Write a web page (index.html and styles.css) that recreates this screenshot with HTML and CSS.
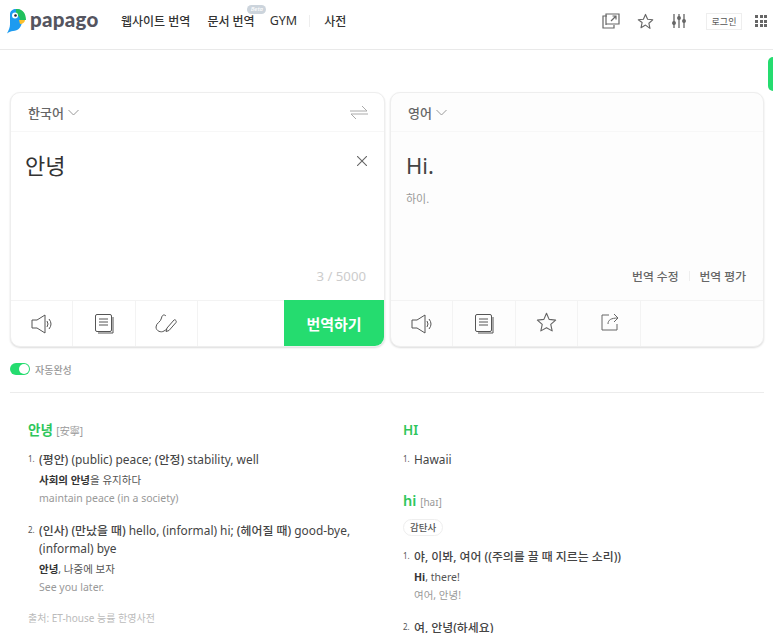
FILE: index.html
```html
<!DOCTYPE html>
<html lang="ko">
<head>
<meta charset="UTF-8" />
<meta name="viewport" content="width=device-width, initial-scale=1" />
<title>papago</title>
<link rel="stylesheet" href="styles.css">
</head>
<body>
  <header class="header">
    <a class="logo">
      <svg width="20" height="25" viewBox="0 0 20 25">
        <path d="M3 5C3 2 6 0 9 0c4 0 6 2 6 6v6c0 6-4 10-9 10-2 0-4 1-6 2.500 1.500-3 3-6 3-9z" fill="#1d9bf0"/>
        <path d="M9 0c6-.5 10 4 10 11h-6c0-3-1.500-5-4-5z" fill="#20c05c"/>
        <path d="M12 11h6c0 2-2 4-5 4z" fill="#fbc02d"/>
        <circle cx="8" cy="6.500" r="3" fill="#fff"/>
        <circle cx="8.500" cy="6.500" r="1.300" fill="#223"/>
      </svg>
      <span class="logo-text">papago</span>
    </a>
    <nav class="nav">
      <a>웹사이트 번역</a>
      <a class="has-beta">문서 번역<i class="beta">Beta</i></a>
      <a class="gym">GYM</a>
      <span class="nav-sep"></span>
      <a>사전</a>
    </nav>
    <div class="tools">
      <svg class="tool" width="18" height="16" viewBox="0 0 18 16" fill="none" stroke="#666" stroke-width="1.200">
        <path d="M5 3H1v12h11v-3"/><path d="M4 12V1h13v10H4"/><path d="M9 8l5-5M10.500 3H14v3.500"/>
      </svg>
      <svg class="tool star-top" width="17" height="17" viewBox="0 0 24 24" fill="none" stroke="#666" stroke-width="1.600" stroke-linejoin="round">
        <path d="M12 2l3 6.800 7.200.8-5.400 4.900 1.500 7.200L12 17.100l-6.300 3.600 1.500-7.200L1.800 9.600 9 8.800z"/>
      </svg>
      <svg class="tool" width="14" height="14" viewBox="0 0 14 14" stroke="#666" stroke-width="1.300" fill="#666">
        <path d="M2 0v14M7 0v14M12 0v14" fill="none"/>
        <circle cx="2" cy="9" r="1.300"/><circle cx="7" cy="4" r="1.300"/><circle cx="12" cy="7" r="1.300"/>
      </svg>
      <button class="login">로그인</button>
      <div class="apps"><i></i><i></i><i></i><i></i><i></i><i></i><i></i><i></i><i></i></div>
    </div>
  </header>

  <div class="side-tab"></div>

  <main class="main">
    <section class="panels">
      <div class="panel">
        <div class="panel-head">
          <span class="lang">한국어<svg class="chev" width="11" height="7" viewBox="0 0 11 7"><path d="M.5 1l5 5 5-5" fill="none" stroke="#999"/></svg></span>
          <svg width="18" height="15" viewBox="0 0 18 15" fill="none" stroke="#aaa"><path d="M0 6h17L12 1M18 9H1l5 5"/></svg>
        </div>
        <div class="panel-body">
          <div class="source-row">
            <p class="source">안녕</p>
            <svg class="clear" width="10" height="10" viewBox="0 0 10 10" stroke="#666" stroke-width="1.100"><path d="M0 0l10 10M10 0L0 10"/></svg>
          </div>
          <div class="count">3 / 5000</div>
        </div>
        <div class="panel-foot">
          <span class="foot-btn">
            <svg width="22" height="20" viewBox="0 0 22 20" fill="none" stroke="#555"><path d="M1 6h5l8-5v18l-8-5H1z"/><path d="M16 7q2 3 0 6M18 5q4 5 0 10"/></svg>
          </span>
          <span class="foot-btn">
            <svg width="19" height="20" viewBox="0 0 19 20" fill="none" stroke="#555"><rect x=".5" y=".5" width="16" height="17" rx="1.500"/><path d="M18 3v16H3M4 5h9M4 8h9M4 11h9"/></svg>
          </span>
          <span class="foot-btn">
            <svg width="22" height="19" viewBox="0 0 22 19" fill="none" stroke="#555"><path d="M11 2C9 0 7 1 6.500 4 6 8 1 9 1 13c0 4 5 6 8 4 1-.5 2-1.500 3-2"/><path d="M12 14l7-8c1-1 3 1 2 2.500L14 16.500 11 17.500z"/></svg>
          </span>
          <button class="translate">번역하기</button>
        </div>
      </div>

      <div class="panel panel-result">
        <div class="panel-head">
          <span class="lang">영어<svg class="chev" width="11" height="7" viewBox="0 0 11 7"><path d="M.5 1l5 5 5-5" fill="none" stroke="#999"/></svg></span>
        </div>
        <div class="panel-body">
          <p class="target">Hi.</p>
          <p class="pron">하이.</p>
          <div class="result-links"><a>번역 수정</a><span class="link-sep"></span><a>번역 평가</a></div>
        </div>
        <div class="panel-foot">
          <span class="foot-btn">
            <svg width="22" height="20" viewBox="0 0 22 20" fill="none" stroke="#555"><path d="M1 6h5l8-5v18l-8-5H1z"/><path d="M16 7q2 3 0 6M18 5q4 5 0 10"/></svg>
          </span>
          <span class="foot-btn">
            <svg width="19" height="20" viewBox="0 0 19 20" fill="none" stroke="#555"><rect x=".5" y=".5" width="16" height="17" rx="1.500"/><path d="M18 3v16H3M4 5h9M4 8h9M4 11h9"/></svg>
          </span>
          <span class="foot-btn">
            <svg class="raise" width="21" height="20" viewBox="0 0 24 23" fill="none" stroke="#666" stroke-width="1.300" stroke-linejoin="round"><path d="M12 1.500l3 7 7.500.8-5.600 5 1.600 7.400L12 18l-6.500 3.700 1.600-7.400-5.600-5L9 8.500z"/></svg>
          </span>
          <span class="foot-btn">
            <svg class="raise nudge" width="19" height="18" viewBox="0 0 19 18" fill="none" stroke="#666"><path d="M8 2H1v15h15v-6"/><path d="M7 11c0-4 3-6 10-6M13 1l4 4-4 4"/></svg>
          </span>
        </div>
      </div>
    </section>

    <div class="autocomplete">
      <span class="switch"></span>
      <span>자동완성</span>
    </div>

    <section class="dict">
      <div class="dict-col">
        <h3 class="word">안녕 <small>[安寧]</small></h3>
        <ol class="means">
          <li>
            <span class="num">1.</span>
            <div>
              <p class="mean"><span class="ko">(평안)</span> (public) peace; <span class="ko">(안정)</span> stability, well</p>
              <p class="ex"><b>사회의 안녕</b>을 유지하다</p>
              <p class="ex-tr">maintain peace (in a society)</p>
            </div>
          </li>
          <li>
            <span class="num">2.</span>
            <div>
              <p class="mean"><span class="ko">(인사) (만났을 때)</span> hello, (informal) hi; <span class="ko">(헤어질 때)</span> good-bye, (informal) bye</p>
              <p class="ex"><b>안녕</b>, 나중에 보자</p>
              <p class="ex-tr">See you later.</p>
            </div>
          </li>
        </ol>
        <p class="source-note">출처: ET-house 능률 한영사전</p>
      </div>
      <div class="dict-col">
        <h3 class="word">HI</h3>
        <ol class="means means-short">
          <li><span class="num">1.</span><div><p class="mean">Hawaii</p></div></li>
        </ol>
        <h3 class="word word-hi">hi <small>[haɪ]</small></h3>
        <span class="pos">감탄사</span>
        <ol class="means means-hi">
          <li>
            <span class="num">1.</span>
            <div>
              <p class="mean ko">야, 이봐, 여어 ((주의를 끌 때 지르는 소리))</p>
              <p class="ex"><b>Hi</b>, there!</p>
              <p class="ex-tr">여어, 안녕!</p>
            </div>
          </li>
          <li><span class="num">2.</span><div><p class="mean ko">여, 안녕(하세요)</p></div></li>
        </ol>
      </div>
    </section>
  </main>
</body>
</html>
```
FILE: styles.css
```css
:root {
  --green: #25dc6f;
  --word-green: #2fc65c;
  --line: #eeeeee;
  --text: #333;
  --font: "Noto Sans", "Noto Sans CJK KR", sans-serif;
}
* {
  box-sizing: border-box;
}
html, body {
  height: 633px;
  overflow: hidden;
}
body {
  margin: 0;
  position: relative;
  background: #fff;
  font-family: var(--font);
  color: var(--text);
}
p, ol, h3 {
  margin: 0;
  padding: 0;
}
ol {
  list-style: none;
}

.header {
  height: 50px;
  display: flex;
  align-items: center;
  padding: 0 6px 6px 7px;
  border-bottom: 1px solid #e9e9e9;
}
.logo {
  display: flex;
  align-items: center;
  gap: 3px;
  width: 114px;
  margin-top: -1px;
}
.logo-text {
  font-family: "Lato", sans-serif;
  font-size: 20.500px;
  font-weight: 900;
  color: #55555f;
  line-height: 24px;
  letter-spacing: .3px;
  margin-top: -4px;
}
.nav {
  display: flex;
  align-items: center;
  font-size: 12px;
  font-weight: 500;
  color: #333;
  margin-top: -2px;
}
.nav a {
  margin-right: 17px;
  position: relative;
  white-space: nowrap;
}
.nav .has-beta {
  margin-right: 15px;
}
.nav .gym {
  font-size: 12.500px;
  font-weight: 400;
  margin-right: 12px;
}
.beta {
  position: absolute;
  top: -7px;
  left: 40px;
  width: 19px;
  height: 9px;
  border-radius: 5px;
  background: #ccd4dc;
  color: #fff;
  font-size: 6px;
  line-height: 9px;
  text-align: center;
}
.nav-sep {
  width: 1px;
  height: 12px;
  background: #eee;
  margin-right: 14px;
}
.tools {
  margin-left: auto;
  display: flex;
  align-items: center;
  margin-top: -1px;
}
.tool {
  margin-right: 17px;
}
.tool.star-top {
  margin-right: 18px;
}
.login {
  width: 36px;
  height: 17px;
  padding: 0;
  border: 1px solid #eee;
  background: #fff;
  color: #555;
  font: 9px var(--font);
  margin-left: 3px;
  margin-right: 13px;
}
.apps {
  width: 12px;
  display: grid;
  grid-template-columns: repeat(3, 3px);
  gap: 1.500px;
}
.apps i {
  height: 3px;
  background: #666;
}

.side-tab {
  position: absolute;
  right: 0;
  top: 57px;
  width: 5px;
  height: 34px;
  background: var(--green);
  border-radius: 6px 0 0 6px;
}

.main {
  padding: 42px 9px 0 10px;
}
.panels {
  display: flex;
  gap: 5px;
}
.panel {
  width: 375px;
  height: 255px;
  display: flex;
  flex-direction: column;
  background: #fff;
  border: 1px solid #eee;
  border-radius: 10px;
  box-shadow: 0 1px 2px rgba(0,0,0,0.14);
  overflow: hidden;
}
.panel-result {
  width: 374px;
  background: #fdfdfd;
}
.panel-head {
  height: 39px;
  flex: none;
  display: flex;
  align-items: center;
  justify-content: space-between;
  padding: 0 16px 0 17px;
  border-bottom: 1px solid #f7f7f7;
}
.lang {
  font-size: 13px;
  font-weight: 500;
  color: #666;
  display: flex;
  align-items: center;
  gap: 4px;
}
.panel-body {
  flex: 1;
  display: flex;
  flex-direction: column;
  padding: 16px 17px 15px 14px;
}
.panel-result .panel-body {
  padding-left: 15px;
}
.source-row {
  display: flex;
  justify-content: space-between;
  align-items: flex-start;
  flex: 1;
}
.source {
  font-size: 22px;
  line-height: 34px;
  color: #333;
}
.clear {
  margin: 8px 0 0;
}
.count {
  text-align: right;
  font-size: 13.200px;
  line-height: 18px;
  color: #ccc;
  padding-right: 1px;
}
.target {
  font-size: 22px;
  font-weight: 400;
  line-height: 34px;
  color: #444;
}
.pron {
  font-size: 11px;
  line-height: 18px;
  color: #999;
  margin-top: 8px;
  flex: 1;
}
.result-links {
  display: flex;
  align-items: center;
  justify-content: flex-end;
  font-size: 11.800px;
  font-weight: 500;
  line-height: 18px;
  color: #666;
}
.link-sep {
  width: 1px;
  height: 10px;
  background: #eee;
  margin: 0 10px;
}
.panel-foot {
  height: 46px;
  flex: none;
  display: flex;
  align-items: stretch;
  border-top: 1px solid #f3f3f3;
}
.foot-btn {
  width: 62.400px;
  display: flex;
  align-items: center;
  justify-content: center;
  border-right: 1px solid #f3f3f3;
}
.raise {
  margin-bottom: 3px;
}
.nudge {
  margin-left: 3px;
}
.translate {
  margin-left: auto;
  width: 100px;
  margin-top: -1px;
  border: none;
  background: var(--green);
  color: #fff;
  font: 700 15px var(--font);
  padding: 0;
}

.autocomplete {
  display: flex;
  align-items: center;
  gap: 5px;
  height: 14px;
  margin-top: 15px;
  font-size: 10px;
  font-weight: 500;
  color: #999;
}
.switch {
  width: 20px;
  height: 12px;
  border-radius: 6px;
  background: var(--green);
  position: relative;
}
.switch::after {
  content: "";
  position: absolute;
  right: 1px;
  top: 1px;
  width: 10px;
  height: 10px;
  border-radius: 50%;
  background: #fff;
}

.dict {
  margin-top: 16px;
  border-top: 1px solid #ececec;
  padding: 28px 0 0 18px;
  display: grid;
  grid-template-columns: 375px 1fr;
}
.word {
  font-size: 13.500px;
  font-weight: 600;
  line-height: 18px;
  color: var(--word-green);
}
.word small {
  font-size: 10px;
  font-weight: 400;
  color: #999;
}
.word-hi {
  margin-top: 23px;
  font-size: 14.500px;
}
.means {
  margin-top: 10px;
}
.means-short {
  margin-top: 11px;
}
.means-hi {
  margin-top: 11px;
}
.means li {
  display: flex;
  margin-bottom: 14px;
}
.num {
  width: 11px;
  flex: none;
  font-size: 8px;
  line-height: 18px;
  color: #555;
}
.mean {
  font-size: 11.900px;
  line-height: 18px;
  color: #444;
}
.ko {
  font-weight: 500;
}
.ex {
  font-size: 10.500px;
  line-height: 18px;
  color: #555;
  margin-top: 3px;
}
.ex b {
  font-weight: 700;
  color: #333;
}
.ex-tr {
  font-size: 10.500px;
  line-height: 18px;
  color: #999;
}
.source-note {
  font-size: 10px;
  line-height: 16px;
  color: #bbb;
  margin-top: 8px;
}
.pos {
  display: inline-block;
  height: 17px;
  line-height: 15px;
  margin-top: 8px;
  padding: 0 6px;
  border: 1px solid #eee;
  border-radius: 9px;
  font-size: 9.500px;
  font-weight: 500;
  color: #555;
}
```
